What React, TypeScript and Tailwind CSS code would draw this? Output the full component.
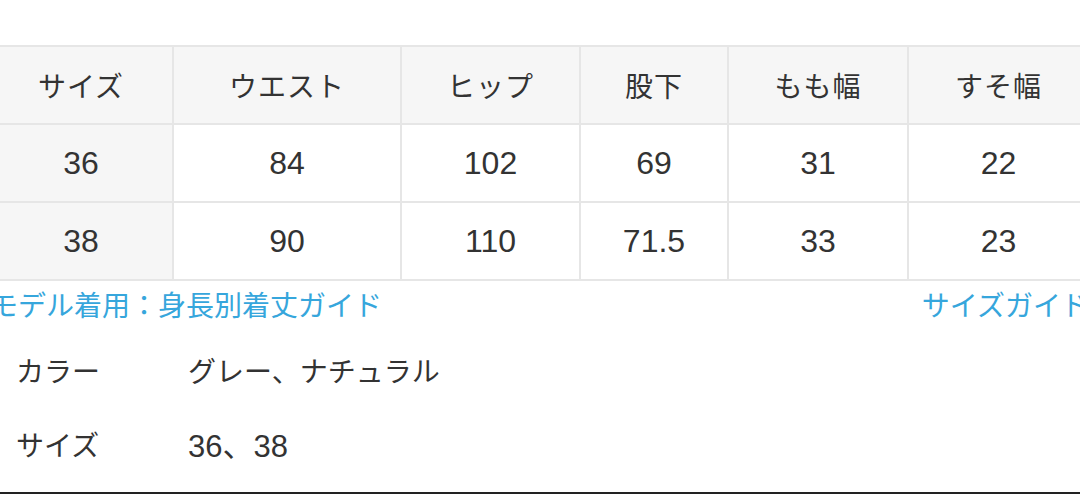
import React from "react";

const headers = ["サイズ", "ウエスト", "ヒップ", "股下", "もも幅", "すそ幅"];
const rows = [
  ["36", "84", "102", "69", "31", "22"],
  ["38", "90", "110", "71.5", "33", "23"],
];

export default function App() {
  return (
    <div className="w-[1080px] h-[494px] overflow-hidden bg-white flex flex-col font-['Liberation_Sans','Noto_Sans_CJK_JP',sans-serif] text-[#333333]">
      <div className="h-[45px] shrink-0" />
      <div className="overflow-hidden shrink-0">
        <div className="-ml-[10px] w-[1098px] grid grid-cols-[182px_226px_177px_146px_178px_179px] gap-[2px] py-[2px] bg-[#e6e6e6]">
          {headers.map((h) => (
            <div key={h} className="h-[76px] pt-[5px] bg-[#f6f6f6] flex items-center justify-center text-[28px] tracking-[1px]">
              {h}
            </div>
          ))}
          {rows.map((r, ri) =>
            r.map((c, ci) => (
              <div
                key={ri + "-" + ci}
                className={
                  ci === 0
                    ? "h-[76px] bg-[#f6f6f6] flex items-center justify-center text-[32px]"
                    : "h-[76px] bg-white flex items-center justify-center text-[32px]"
                }
              >
                {c}
              </div>
            ))
          )}
        </div>
      </div>
      <div className="h-[50px] pt-[2px] shrink-0 flex items-center justify-between text-[28px] text-[#36a6dc] overflow-hidden">
        <span className="-ml-[10px] whitespace-nowrap">モデル着用：身長別着丈ガイド</span>
        <span className="-mr-[9px] whitespace-nowrap">サイズガイド</span>
      </div>
      <div className="h-[84px] shrink-0 flex items-center text-[28px]">
        <span className="w-[188px] pl-[16px]">カラー</span>
        <span>グレー、ナチュラル</span>
      </div>
      <div className="h-[64px] shrink-0 flex items-center text-[28px]">
        <span className="w-[188px] pl-[16px]">サイズ</span>
        <span className="text-[31px]">36、38</span>
      </div>
      <div className="flex-1" />
      <div className="h-[2px] bg-[#222222] shrink-0" />
    </div>
  );
}
